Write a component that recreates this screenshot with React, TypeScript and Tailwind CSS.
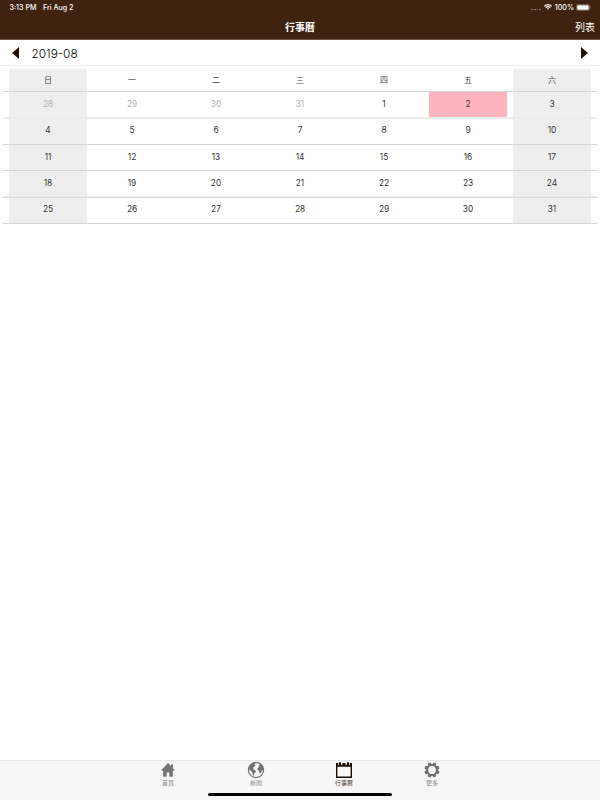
import React from "react";

const weekdays = ["日", "一", "二", "三", "四", "五", "六"];

const weeks = [
  { days: [28, 29, 30, 31, 1, 2, 3], leading: "leading-[24px]", line: "h-[2px] bg-[#ebebeb]" },
  { days: [4, 5, 6, 7, 8, 9, 10], leading: "leading-[22px]", line: "h-px bg-[#d3d3d3]" },
  { days: [11, 12, 13, 14, 15, 16, 17], leading: "leading-[24px]", line: "h-px bg-[#d3d3d3]" },
  { days: [18, 19, 20, 21, 22, 23, 24], leading: "leading-[24px]", line: "h-[2px] bg-[linear-gradient(#eaeaea_50%,#dadada_50%)]" },
  { days: [25, 26, 27, 28, 29, 30, 31], leading: "leading-[22px]", line: "h-px bg-[#d3d3d3]" },
];

function cellColor(week: number, col: number) {
  if (week === 0 && col === 5) return "bg-[#ffb3be]";
  return col === 0 || col === 6 ? "bg-[#eeeeee]" : "";
}

function HomeIcon() {
  return (
    <svg width="16" height="16" viewBox="0 0 16 16" fill="#757575">
      <path d="M8 1 .8 8.6h2.3v6.1h3.6v-4.2h2.6v4.2h3.6V8.6h2.3l-2.2-2.4V2.6h-2v1.5Z" />
    </svg>
  );
}

function GlobeIcon() {
  return (
    <svg width="18" height="18" viewBox="0 0 18 18">
      <circle cx="9" cy="9" r="7.6" fill="#f7f7f7" stroke="#707070" strokeWidth="1.2" />
      <path
        fill="#707070"
        d="M2 7 3 4.6 5 3l2-.9 1.6.3-.8 1.5.5.8-1.9 1.6.4 1.2-1.3.5 1.9.7L9 10.2l-.9 1.6-1 1-.3 1.8-1-.7-.4-2.5L4 9.8 2.4 9ZM12 4l1.4-1 1.8 1.9 1 2.9-.2 1.9-1-.6-.7 2.4-1.3 1.1-.9-1.1V9.8l-1.5-.5-.4-1.4.9-1.4 1.6-.4-1.2-.8Z"
      />
    </svg>
  );
}

function CalendarIcon() {
  return (
    <svg width="18" height="18" viewBox="0 0 18 18">
      <path fill="#1c0d08" d="M1 2h16v15H1ZM2.4 5.8v9.8h13.2V5.8Z" fillRule="evenodd" />
      <path fill="#f7f7f7" d="M3.2 1h1v3h-1ZM5.8 1h1.6v2.7H5.8ZM10.4 1h1.5v2.7h-1.5ZM13.8 1h1v3h-1Z" />
      <path fill="#1c0d08" d="M4.2 1h1.5v3H4.2ZM12.2 1h1.5v3h-1.5Z" />
    </svg>
  );
}

function GearIcon() {
  return (
    <svg width="16" height="16" viewBox="0 0 16 16" fill="none">
      <circle cx="8" cy="8" r="5" stroke="#707070" strokeWidth="2.2" />
      <g fill="#707070">
        {[22.5, 67.5, 112.5, 157.5, 202.5, 247.5, 292.5, 337.5].map((angle) => (
          <path key={angle} d="M6 3.2 6.6.4h2.8l.6 2.8Z" transform={`rotate(${angle} 8 8)`} />
        ))}
      </g>
    </svg>
  );
}

const tabs = [
  { label: "首頁", icon: <HomeIcon />, color: "text-[#8c8c8c]" },
  { label: "新聞", icon: <GlobeIcon />, color: "text-[#8c8c8c]" },
  { label: "行事曆", icon: <CalendarIcon />, color: "text-[#4b3932]" },
  { label: "更多", icon: <GearIcon />, color: "text-[#8c8c8c]" },
];

export default function App() {
  return (
    <div className="flex h-[800px] w-[600px] flex-col overflow-hidden bg-white font-[Inter,'Noto_Sans_CJK_TC',sans-serif] text-black antialiased">
      <header className="h-10 shrink-0 border-b border-[#6b5548] bg-[#402210] text-white">
        <div className="flex h-[14px] items-center justify-between pl-[9.5px] pr-[9px] text-[7.1px] font-medium leading-[14px]">
          <div className="flex gap-[6.5px] pt-px">
            <span>3:13 PM</span>
            <span>Fri Aug 2</span>
          </div>
          <div className="flex items-center pt-px">
            <div className="mr-[3px] mt-[4px] flex gap-[1px]">
              {[0, 1, 2, 3].map((dot) => (
                <span key={dot} className="size-[1.6px] rounded-full bg-[#96857b]" />
              ))}
            </div>
            <svg width="8" height="6" viewBox="0 0 8 6" className="mb-px mr-[3px]" fill="none" stroke="white" strokeWidth="1.3">
              <path d="M.4 2.2C2.3.2 5.7.2 7.6 2.2M1.7 3.6c1.2-1.2 3.4-1.2 4.6 0" />
              <path d="M4 5.8 2.9 4.6c.6-.5 1.6-.5 2.2 0Z" fill="white" stroke="none" />
            </svg>
            <span>100%</span>
            <svg width="15" height="7" viewBox="0 0 15 7" className="mb-px ml-[2px]">
              <rect x=".4" y=".4" width="13" height="6.2" rx="1.8" fill="none" stroke="#a09086" strokeWidth=".6" />
              <rect x="1.2" y="1.2" width="11.4" height="4.6" rx="1" fill="white" />
              <path d="M14 2.5c.9.2.9 1.8 0 2Z" fill="#a09086" />
            </svg>
          </div>
        </div>
        <div className="grid h-[25px] grid-cols-3 items-center pt-px text-[10px] leading-[25px]">
          <span />
          <h1 className="text-center font-bold">行事曆</h1>
          <span className="pr-[5px] text-right">列表</span>
        </div>
      </header>

      <div className="flex h-[26px] shrink-0 items-center border-b border-[#eeeeee] px-3">
        <svg width="7" height="12" viewBox="0 0 7 12">
          <path d="M7 0v12L0 6Z" fill="#281007" />
        </svg>
        <span className="ml-[12.5px] pt-[2px] text-[11.8px] font-light leading-4">2019-08</span>
        <svg width="7" height="12" viewBox="0 0 7 12" className="ml-auto">
          <path d="M0 0v12l7-6Z" fill="#281007" />
        </svg>
      </div>

      <main className="flex-1 px-[3px] pt-[3px] text-[8.3px]">
        <div className="grid grid-cols-7 px-[3px]">
          {weekdays.map((day, col) => (
            <div key={day} className={`mx-[3px] h-[22px] text-center text-[8px] leading-[22px] text-[#444] ${col % 6 === 0 ? "bg-[#eeeeee]" : ""}`}>
              {day}
            </div>
          ))}
        </div>
        <div className="h-px bg-[#d3d3d3]" />
        {weeks.map((week, row) => (
          <React.Fragment key={row}>
            <div className="grid grid-cols-7 px-[3px]">
              {week.days.map((day, col) => (
                <div
                  key={col}
                  className={`mx-[3px] h-[25px] text-center ${week.leading} ${cellColor(row, col)} ${row === 0 && col < 4 ? "text-[#b0b0b0]" : "text-[#333]"}`}
                >
                  {day}
                </div>
              ))}
            </div>
            <div className={week.line} />
          </React.Fragment>
        ))}
      </main>

      <footer className="h-[40.5px] shrink-0 border-t border-[#e5e5e5] bg-[#f7f7f7]">
        <nav className="flex h-[32px] justify-center">
          {tabs.map((tab) => (
            <div key={tab.label} className={`flex w-[88px] flex-col items-center ${tab.color}`}>
              <div className="flex h-[18px] items-center justify-center">{tab.icon}</div>
              <span className="text-[6px] leading-[7px]">{tab.label}</span>
            </div>
          ))}
        </nav>
        <div className="mx-auto h-[3px] w-[184px] rounded-full bg-black" />
      </footer>
    </div>
  );
}
